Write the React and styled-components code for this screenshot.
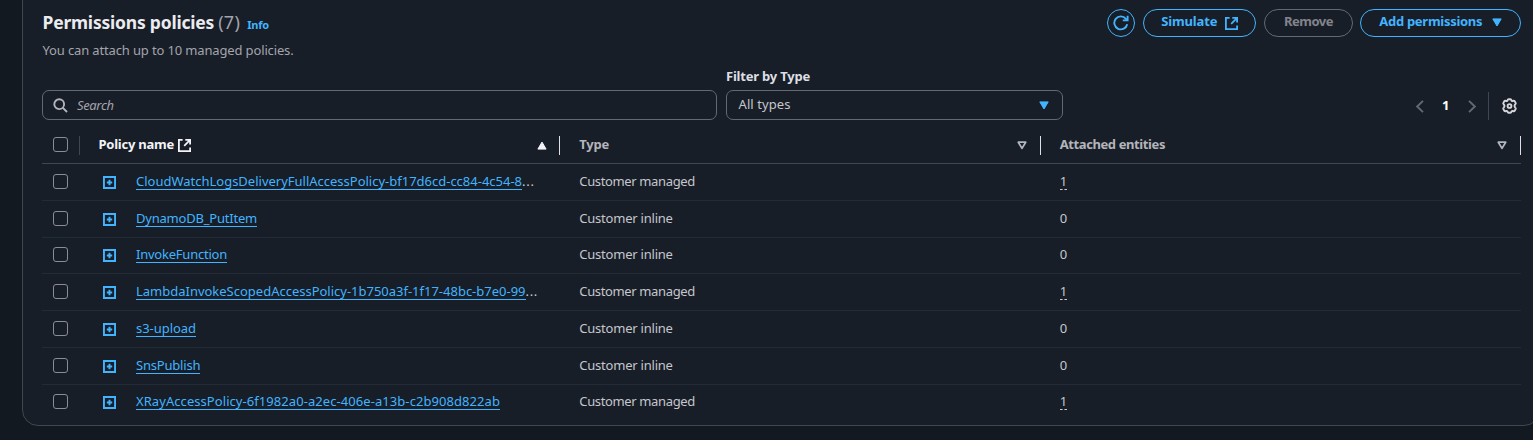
import React from 'react';
import styled, { createGlobalStyle, css } from 'styled-components';

const c = {
  page: '#121920',
  panel: '#171e27',
  border: '#424650',
  control: '#656871',
  rowLine: '#232b37',
  blue: '#42b4ff',
  text: '#c6c6cd',
  head: '#b4b4bb',
  bright: '#ebebf0',
};

const GlobalStyle = createGlobalStyle`
  *, *::before, *::after { box-sizing: border-box; }
  body {
    margin: 0;
    height: 440px;
    overflow: hidden;
    background: ${c.page};
    color: ${c.text};
    font: 400 13px/20px "Noto Sans", "Open Sans", sans-serif;
  }
  svg { display: block; flex: none; }
`;

const Text = styled.span`
  white-space: nowrap;
  letter-spacing: ${(p) => p.$ls || 0}px;
`;

const Page = styled.main`
  width: 1533px;
  height: 440px;
  padding-left: 22px;
  overflow: hidden;
`;

const Panel = styled.section`
  width: 1518px;
  height: 442px;
  margin-top: -16px;
  padding: 25px 19px 0 19px;
  background: ${c.panel};
  border: 1px solid ${c.border};
  border-radius: 16px;
`;

const Header = styled.header`
  display: flex;
  justify-content: space-between;
  width: 1479px;
  height: 57px;
`;

const TitleRow = styled.div`
  display: flex;
  align-items: baseline;
  height: 25px;
  padding-left: 0.5px;
  line-height: 25px;
`;

const Title = styled.h2`
  margin: 0;
  font-size: 17.5px;
  font-weight: 700;
  line-height: 25px;
  letter-spacing: -0.21px;
  color: ${c.bright};
`;

const Count = styled.span`
  margin-left: 4px;
  font-size: 18px;
  letter-spacing: 0.3px;
  color: #a4a4ad;
`;

const Info = styled.a`
  margin-left: 7px;
  font-size: 11px;
  font-weight: 700;
  letter-spacing: -0.2px;
  color: ${c.blue};
`;

const Description = styled.p`
  margin: 5px 0 0 0.5px;
  font-size: 13px;
  line-height: 20px;
  letter-spacing: -0.142px;
  color: #a4a4ad;
`;

const Actions = styled.div`
  display: flex;
  align-items: flex-start;
`;

const Button = styled.button`
  display: flex;
  align-items: center;
  justify-content: center;
  width: ${(p) => p.$w}px;
  height: 28px;
  margin: -1px 0 0 ${(p) => p.$gap || 8}px;
  padding: 0 0 4px;
  background: transparent;
  border: 1px solid ${(p) => (p.disabled ? c.control : c.blue)};
  border-radius: 14px;
  color: ${(p) => (p.disabled ? '#83838b' : c.blue)};
  font: 700 13px/20px "Noto Sans", "Open Sans", sans-serif;
`;

const IconSlot = styled.span`
  margin-left: ${(p) => p.$gap ?? 0}px;
  padding-top: ${(p) => p.$drop ?? 3}px;
  color: ${(p) => (p.$blue ? c.blue : 'inherit')};
`;

const Filters = styled.div`
  display: flex;
  align-items: flex-end;
  width: 1479px;
  height: 53px;
`;

const field = css`
  display: flex;
  align-items: center;
  height: 30px;
  border: 1px solid ${c.control};
  border-radius: 7px;
`;

const SearchField = styled.div`
  ${field}
  width: 675px;
  margin-right: 9px;
  padding-left: 10px;
  gap: 9px;
  color: #a4a4ad;
  font-style: italic;
`;

const FilterGroup = styled.div`
  display: flex;
  flex-direction: column;
  width: 337px;
`;

const Label = styled.label`
  height: 23px;
  line-height: 18px;
  font-weight: 700;
  color: #dedee3;
`;

const Select = styled.div`
  ${field}
  justify-content: space-between;
  padding: 0 13.5px 2px 11.5px;
`;

const Pager = styled.nav`
  display: flex;
  align-items: center;
  height: 28px;
  margin-left: auto;
  color: ${c.control};
`;

const PageNumber = styled.span`
  width: 44.5px;
  padding-bottom: 2px;
  text-align: center;
  font-weight: 700;
  color: #fff;
`;

const PagerDivider = styled.span`
  width: 1px;
  height: 28px;
  margin: 0 13px 0 12px;
  background: ${c.border};
`;

const GearButton = styled.span`
  margin-right: 4px;
  color: #d5d5da;
`;

const Table = styled.div`
  width: 1479px;
`;

const columns = css`
  display: grid;
  grid-template-columns: 38px 480.3px 480.4px 480.3px;
`;

const HeadRow = styled.div`
  ${columns}
  height: 44px;
  border-bottom: 1px solid ${c.border};
`;

const HeadCell = styled.div`
  display: flex;
  align-items: center;
  height: 19px;
  margin-top: 16px;
  padding-left: ${(p) => (p.$select ? 11 : p.$sorted ? 18.4 : 19)}px;
  border-right: 1px solid ${(p) => (p.$select ? c.border : '#dedee3')};
  font-weight: 700;
  color: ${(p) => (p.$sorted ? '#f3f3f7' : c.head)};
`;

const HeadLabel = styled(Text)`
  padding-bottom: ${(p) => p.$lift}px;
`;

const SortMark = styled.span`
  margin: 0 12.5px 1px auto;
`;

const Row = styled.div`
  ${columns}
  height: ${(p) => (p.$last ? 35.75 : 36.75)}px;
  border-bottom: ${(p) => (p.$last ? 'none' : `1px solid ${c.rowLine}`)};
`;

const Cell = styled.div`
  display: flex;
  align-items: center;
  padding: 0 0 2px ${(p) => (p.$select ? 11 : 19)}px;
`;

const Checkbox = styled.span`
  width: 15px;
  height: 15px;
  margin-top: ${(p) => p.$top || 0}px;
  border: 1px solid #8c8c94;
  border-radius: 3px;
`;

const Expand = styled.span`
  margin: 3px 20px 0 4px;
  color: ${c.blue};
`;

const underlined = css`
  height: 17px;
  margin-top: 1px;
  line-height: 16px;
`;

const PolicyLink = styled.a`
  ${underlined}
  border-bottom: 1px solid ${c.blue};
  white-space: nowrap;
  letter-spacing: ${(p) => p.$ls}px;
  color: ${c.blue};
`;

const Entities = styled.span`
  ${underlined}
  border-bottom: 1px ${(p) => (p.$linked ? `dashed ${c.text}` : 'solid transparent')};
`;

const Refresh = () => (
  <svg width="16" height="16" viewBox="0 0 16 16" fill="none" stroke="currentColor" strokeWidth="1.9">
    <path d="M14.2 9.2A6.5 6.5 0 1 1 12.9 3.8L14.4 5.4" />
    <path d="M14.6 0.8V5.4H9.8" />
  </svg>
);

const External = () => (
  <svg width="13" height="13" viewBox="0 0 13 13" fill="none" stroke="currentColor" strokeWidth="1.8">
    <path d="M4.6 0.9H0.9V12.1H12.1V8.4" />
    <path d="M7.3 0.9H12.1V5.6M12.1 0.9L6.2 6.8" />
  </svg>
);

const Caret = ({ up, outline }) => (
  <svg width="10" height="9" viewBox="0 0 10 9" fill={outline ? 'none' : 'currentColor'} stroke="currentColor" strokeWidth={outline ? 1.8 : 1} strokeLinejoin="round">
    <path d={up ? 'M0.9 8.1L5 1.1L9.1 8.1Z' : outline ? 'M1.3 1.2H8.7L5 7.4Z' : 'M0.8 0.9H9.2L5 8Z'} />
  </svg>
);

const SearchIcon = () => (
  <svg width="15" height="15" viewBox="0 0 15 15" fill="none" stroke="#b4b4bb" strokeWidth="1.9">
    <circle cx="6.2" cy="6.2" r="4.9" />
    <path d="M9.7 9.7L14 14" />
  </svg>
);

const Chevron = ({ right }) => (
  <svg width="8" height="13" viewBox="0 0 8 13" fill="none" stroke="currentColor" strokeWidth="1.9">
    <path d={right ? 'M1 0.9L6.8 6.5L1 12.1' : 'M7 0.9L1.2 6.5L7 12.1'} />
  </svg>
);

const Gear = () => (
  <svg width="15" height="16" viewBox="0 0 15 16" fill="none" stroke="currentColor" strokeWidth="1.9" strokeLinejoin="round">
    <path d="M5.6 2.2Q5.8 1.2 6.6 1.2H8.4Q9.2 1.2 9.4 2.2Q9.6 3.2 10.7 3Q12.2 2.5 12.7 3.3L13.6 4.9Q14 5.7 13.2 6.4Q11.9 8 13.2 9.6Q14 10.3 13.6 11.1L12.7 12.7Q12.2 13.5 10.7 13Q9.6 12.8 9.4 13.8Q9.2 14.8 8.4 14.8H6.6Q5.8 14.8 5.6 13.8Q5.4 12.8 4.3 13Q2.8 13.5 2.3 12.7L1.4 11.1Q1 10.3 1.8 9.6Q3.1 8 1.8 6.4Q1 5.7 1.4 4.9L2.3 3.3Q2.8 2.5 4.3 3Q5.4 3.2 5.6 2.2Z" />
    <circle cx="7.5" cy="8" r="1.9" />
  </svg>
);

const PlusBox = () => (
  <svg width="13" height="13" viewBox="0 0 13 13" fill="none" stroke="currentColor" strokeWidth="1.9">
    <path d="M0.95 0.95H12.05V12.05H0.95Z" />
    <path d="M6.5 3.8V9.2M3.8 6.5H9.2" />
  </svg>
);

const policies = [
  { name: 'CloudWatchLogsDeliveryFullAccessPolicy-bf17d6cd-cc84-4c54-8', ls: -0.006, more: true, managed: true },
  { name: 'DynamoDB_PutItem', ls: -0.21 },
  { name: 'InvokeFunction', ls: -0.228 },
  { name: 'LambdaInvokeScopedAccessPolicy-1b750a3f-1f17-48bc-b7e0-99', ls: -0.009, more: true, managed: true },
  { name: 's3-upload', ls: -0.043 },
  { name: 'SnsPublish', ls: -0.2 },
  { name: 'XRayAccessPolicy-6f1982a0-a2ec-406e-a13b-c2b908d822ab', ls: 0.066, managed: true },
];

export default function App() {
  return (
    <Page>
      <GlobalStyle />
      <Panel>
        <Header>
          <div>
            <TitleRow>
              <Title>Permissions policies</Title>
              <Count>(7)</Count>
              <Info>Info</Info>
            </TitleRow>
            <Description>You can attach up to 10 managed policies.</Description>
          </div>
          <Actions>
            <Button $w={28} aria-label="Refresh"><IconSlot><Refresh /></IconSlot></Button>
            <Button $w={113}>
              <Text $ls={-0.155}>Simulate</Text>
              <IconSlot $gap={7.5} $drop={4}><External /></IconSlot>
            </Button>
            <Button $w={89} disabled><Text $ls={-0.5}>Remove</Text></Button>
            <Button $w={161} $gap={7}>
              <Text $ls={-0.28}>Add permissions</Text>
              <IconSlot $gap={9.5}><Caret /></IconSlot>
            </Button>
          </Actions>
        </Header>
        <Filters>
          <SearchField><SearchIcon /><Text $ls={-0.36}>Search</Text></SearchField>
          <FilterGroup>
            <Label><Text $ls={-0.207}>Filter by Type</Text></Label>
            <Select>
              <Text $ls={0.08}>All types</Text>
              <IconSlot $blue $drop={2}><Caret /></IconSlot>
            </Select>
          </FilterGroup>
          <Pager>
            <Chevron />
            <PageNumber>1</PageNumber>
            <Chevron right />
            <PagerDivider />
            <GearButton><Gear /></GearButton>
          </Pager>
        </Filters>
        <Table>
          <HeadRow>
            <HeadCell $select><Checkbox $top={-2} /></HeadCell>
            <HeadCell $sorted>
              <HeadLabel $ls={-0.22} $lift={4}>Policy name</HeadLabel>
              <IconSlot $gap={4} $drop={0}><External /></IconSlot>
              <SortMark><Caret up /></SortMark>
            </HeadCell>
            <HeadCell><HeadLabel $ls={-0.2} $lift={3}>Type</HeadLabel><SortMark><Caret outline /></SortMark></HeadCell>
            <HeadCell><HeadLabel $ls={-0.4} $lift={3}>Attached entities</HeadLabel><SortMark><Caret outline /></SortMark></HeadCell>
          </HeadRow>
          {policies.map((p, i) => (
            <Row key={p.name} $last={i === policies.length - 1}>
              <Cell $select><Checkbox $top={1} /></Cell>
              <Cell>
                <Expand><PlusBox /></Expand>
                <PolicyLink $ls={p.ls}>{p.name}</PolicyLink>
                {p.more && <Text $ls={0.7}>...</Text>}
              </Cell>
              <Cell><Text $ls={p.managed ? -0.36 : -0.22}>{p.managed ? 'Customer managed' : 'Customer inline'}</Text></Cell>
              <Cell><Entities $linked={p.managed}>{p.managed ? 1 : 0}</Entities></Cell>
            </Row>
          ))}
        </Table>
      </Panel>
    </Page>
  );
}
